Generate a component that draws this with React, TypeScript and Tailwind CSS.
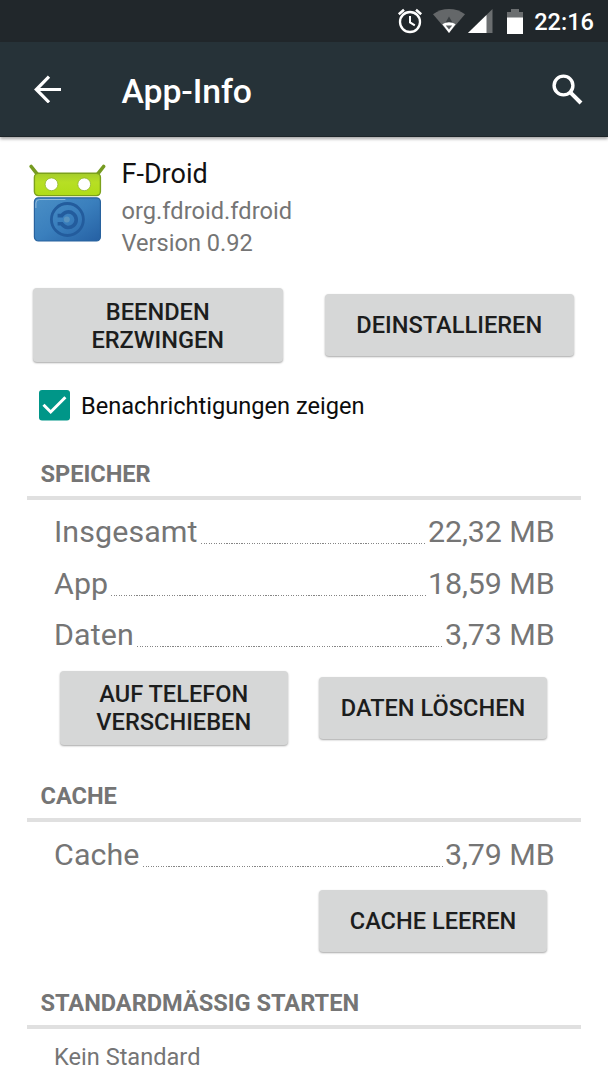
import type { ReactNode } from "react";

type UsageRow = {
  label: string;
  value: string;
};

const storageRows: UsageRow[] = [
  { label: "Insgesamt", value: "22,32 MB" },
  { label: "App", value: "18,59 MB" },
  { label: "Daten", value: "3,73 MB" },
];

function StatusBar() {
  return (
    <div className="flex h-[42px] items-center justify-end bg-[#21272b] pr-[14px] text-white">
      <svg width="28" height="28" viewBox="0 0 28 28" fill="none" stroke="white" className="mr-[9px]">
        <circle cx="14" cy="15" r="10" strokeWidth="2.3" />
        <path d="M14 9v6.4l4.8 3" strokeWidth="2" />
        <path d="M2.8 7.2 8 2.8M25.2 7.2 20 2.8" strokeWidth="2.6" />
      </svg>
      <svg width="32" height="24" viewBox="0 0 32 24" className="mr-[3px]">
        <path d="M0 5.2C4.6 1.8 10 0 16 0s11.4 1.8 16 5.2L16 24z" fill="#646769" />
        <path d="m16 7.5 4 7h-8z" fill="#3a3f42" />
        <path d="M9.4 15.2c1.9-1.3 4.2-2 6.6-2s4.7.7 6.6 2L16 24z" fill="white" />
        <path d="M12.8 16.6h6.4L16 20.4z" fill="#5a5e61" />
      </svg>
      <svg width="25" height="24" viewBox="0 0 25 24" className="mr-[14px]">
        <path d="M0 24 24.5 0v24z" fill="#6b6e70" />
        <path d="M0 24 18.5 6v18z" fill="white" />
      </svg>
      <svg width="16" height="25" viewBox="0 0 16 25" className="mr-[11px]">
        <path d="M0 3h4V0h8v3h4v6H0z" fill="#6b6e70" />
        <path d="M0 8.5h16V25H0z" fill="white" />
      </svg>
      <span className="pt-[2px] text-[23.6px] font-medium leading-10">22:16</span>
    </div>
  );
}

function AppBar() {
  return (
    <header className="relative flex h-[95px] items-center border-b border-[#1d2529] bg-[#263238] text-white shadow-[0_2px_3px_rgba(0,0,0,0.35)]">
      <svg width="28" height="28" viewBox="0 0 28 28" fill="none" stroke="white" strokeWidth="3.2" className="ml-[33.5px]">
        <path d="M27 14.5H2.5M15 1.7 2.3 14.5 15 27.3" />
      </svg>
      <h1 className="ml-[60px] flex-1 pt-[6px] text-[33.8px] font-medium leading-10 tracking-[-0.1px]">App-Info</h1>
      <svg width="31" height="31" viewBox="0 0 31 31" fill="none" stroke="white" className="mr-[25px]">
        <circle cx="11.5" cy="11.5" r="9.4" strokeWidth="3.4" />
        <path d="M18.8 18.8 29 29" strokeWidth="4" />
      </svg>
    </header>
  );
}

function DroidLogo() {
  return (
    <svg width="78" height="82" viewBox="0 0 78 82" className="mt-[5px]">
      <defs>
        <linearGradient id="head" x1="0" y1="0" x2="0" y2="1">
          <stop offset="0" stopColor="#a5cc2c" />
          <stop offset="0.4" stopColor="#b7df24" />
          <stop offset="1" stopColor="#b0dc18" />
        </linearGradient>
        <linearGradient id="body" x1="0" y1="0" x2="1" y2="1">
          <stop offset="0" stopColor="#4a8fc6" />
          <stop offset="0.5" stopColor="#3a7fbd" />
          <stop offset="1" stopColor="#2560a3" />
        </linearGradient>
      </defs>
      <path d="m3.2 4.5 5.8 7.3M75.6 4.5l-5.8 7.3" stroke="#769b21" strokeWidth="3.6" strokeLinecap="round" />
      <rect x="6.4" y="11.3" width="66" height="22.3" rx="4" fill="url(#head)" stroke="#7ca11c" strokeWidth="1.4" />
      <circle cx="23.5" cy="22.3" r="6.4" fill="white" stroke="#8fb52b" strokeWidth="0.8" />
      <circle cx="56.2" cy="22.3" r="6.4" fill="white" stroke="#8fb52b" strokeWidth="0.8" />
      <rect x="6.4" y="35.8" width="66" height="43.2" rx="4" fill="url(#body)" stroke="#28629e" strokeWidth="1.2" />
      <path d="M7.9 46v-5q0-3.5 3.5-3.5h26" fill="none" stroke="#8fb8da" strokeWidth="1" />
      <circle cx="39.4" cy="57.5" r="16" fill="none" stroke="#235c9d" strokeWidth="2.8" />
      <path d="M29.6 53.6h4.2a7.8 7.8 0 1 1 0 8.2h-4.2" fill="none" stroke="#235c9d" strokeWidth="3.6" />
      <circle cx="38.8" cy="57.5" r="3" fill="#5a93bf" />
    </svg>
  );
}

function RaisedButton({ children, className }: { children: ReactNode; className: string }) {
  return (
    <button
      className={`rounded-[4px] bg-[#d6d7d7] text-center text-[23.6px] font-medium leading-[28px] text-[#1c1d1d] shadow-[0_1px_2px_rgba(0,0,0,0.35)] ${className}`}
    >
      {children}
    </button>
  );
}

function SectionTitle({ children }: { children: ReactNode }) {
  return (
    <h2 className="mx-[27px] h-10 border-b-4 border-[#e0e0e0] pl-[13.5px] text-[23.6px] font-bold leading-7 tracking-[-0.03px] text-[#757575]">
      {children}
    </h2>
  );
}

function UsageLine({ label, value }: UsageRow) {
  return (
    <div className="flex h-9 text-[30.4px] leading-9 text-[#757575]">
      <span className="tracking-[0.1px]">{label}</span>
      <span className="ml-[3px] mr-[2px] mt-[29px] h-px flex-1 bg-[repeating-linear-gradient(90deg,#858585_0_1.2px,transparent_1.2px_2.53px)]" />
      <span className="tracking-[-0.1px]">{value}</span>
    </div>
  );
}

export default function App() {
  return (
    <div className="h-[1080px] w-[608px] overflow-hidden bg-white font-['Roboto',sans-serif]">
      <StatusBar />
      <AppBar />

      <main>
        <section className="flex h-[151px] pl-[28px] pt-5">
          <DroidLogo />
          <div className="ml-[15.5px] pt-px text-[23.6px] leading-8 text-[#757575]">
            <p className="mb-[5px] text-[27px] text-[#111]">F-Droid</p>
            <p className="tracking-[0.04px]">org.fdroid.fdroid</p>
            <p>Version 0.92</p>
          </div>
        </section>

        <div className="flex items-center justify-between pl-[33px] pr-[34px]">
          <RaisedButton className="h-[74px] w-[249.5px] pt-px">
            BEENDEN
            <br />
            ERZWINGEN
          </RaisedButton>
          <RaisedButton className="h-[62px] w-[249.5px]">DEINSTALLIEREN</RaisedButton>
        </div>

        <label className="mt-7 flex h-[30px] items-center pl-[38.5px]">
          <svg width="31" height="31" viewBox="0 0 31 31">
            <rect width="31" height="30.5" rx="3" fill="#009688" />
            <path d="m4.5 14.8 7.2 7.2L26.4 7.3" fill="none" stroke="white" strokeWidth="3" />
          </svg>
          <span className="ml-[11.5px] pt-[2px] text-[23.6px] leading-[30px] text-[#0c0c0c]">
            Benachrichtigungen zeigen
          </span>
        </label>

        <section className="pt-10">
          <SectionTitle>SPEICHER</SectionTitle>
          <div className="flex flex-col gap-[15.5px] pl-[54px] pr-[53.5px] pt-[14px]">
            {storageRows.map((row) => (
              <UsageLine key={row.label} {...row} />
            ))}
          </div>
          <div className="mt-[18px] flex items-center justify-between pl-[60px] pr-[61px]">
            <RaisedButton className="h-[74px] w-[227.5px]">
              AUF TELEFON
              <br />
              VERSCHIEBEN
            </RaisedButton>
            <RaisedButton className="h-[62px] w-[228px]">DATEN LÖSCHEN</RaisedButton>
          </div>
        </section>

        <section className="pt-[37px]">
          <SectionTitle>CACHE</SectionTitle>
          <div className="pl-[54px] pr-[53.5px] pt-[15px]">
            <UsageLine label="Cache" value="3,79 MB" />
          </div>
          <div className="mt-[17px] flex justify-end pr-[61px]">
            <RaisedButton className="h-[62px] w-[228px]">CACHE LEEREN</RaisedButton>
          </div>
        </section>

        <section className="pt-[36.5px]">
          <SectionTitle>STANDARDMÄSSIG STARTEN</SectionTitle>
          <p className="pl-[54px] pt-[14px] text-[23.6px] leading-7 text-[#757575]">Kein Standard</p>
        </section>
      </main>
    </div>
  );
}
